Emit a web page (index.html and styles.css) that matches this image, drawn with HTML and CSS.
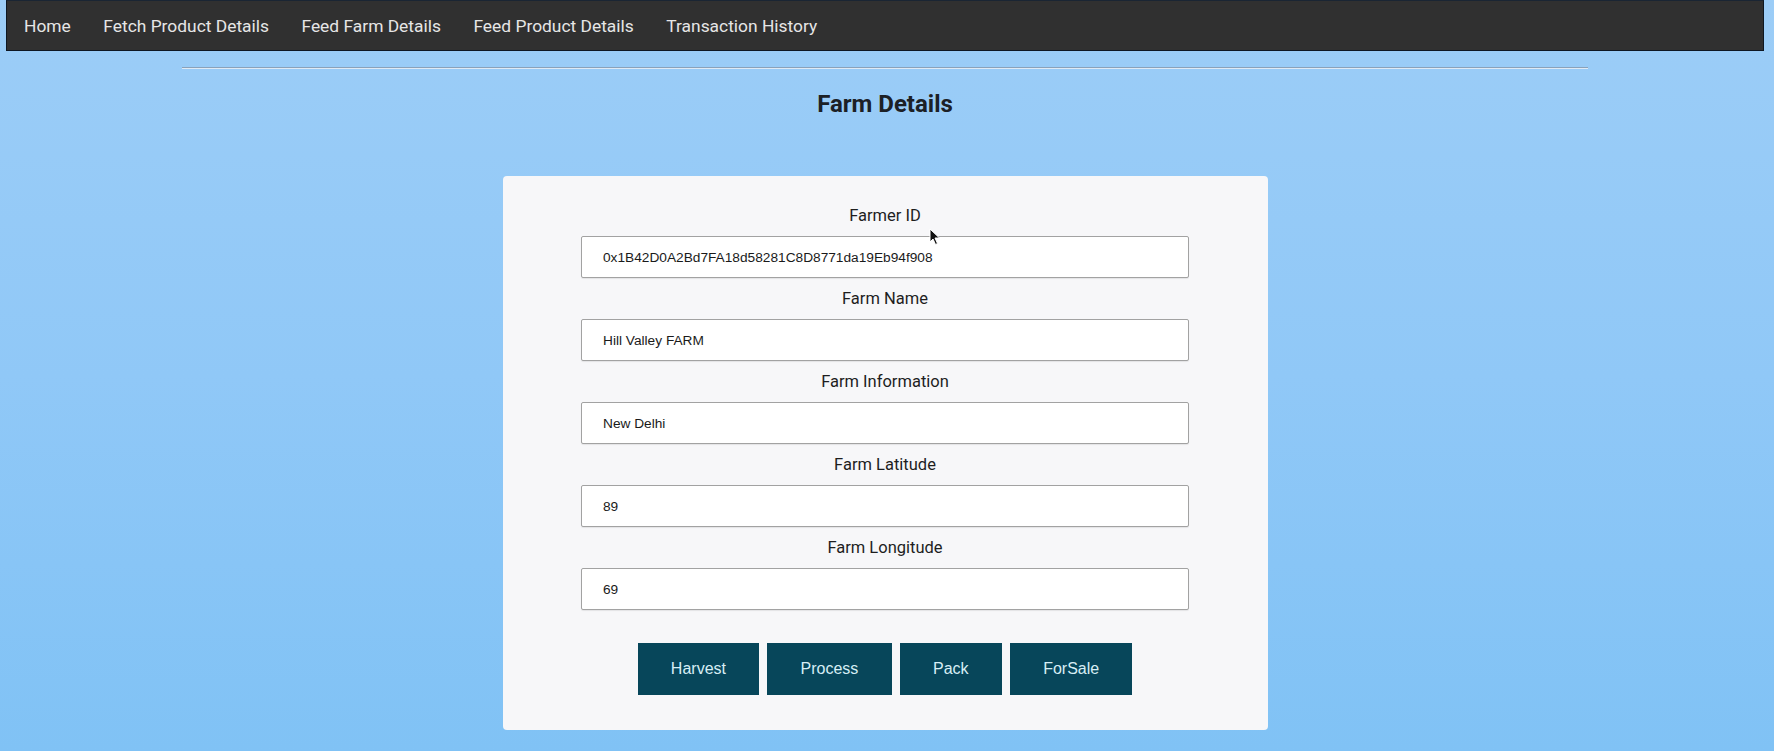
FILE: index.html
```html
<!DOCTYPE html>
<html lang="en">
<head>
<meta charset="utf-8">
<title>Farm Details</title>
<link rel="stylesheet" href="styles.css">
</head>
<body>
<div class="app">
  <nav class="navbar">
    <a class="nav-link" href="#">Home</a>
    <a class="nav-link" href="#">Fetch Product Details</a>
    <a class="nav-link" href="#">Feed Farm Details</a>
    <a class="nav-link" href="#">Feed Product Details</a>
    <a class="nav-link" href="#">Transaction History</a>
  </nav>
  <hr class="divider">
  <h3 class="title">Farm Details</h3>
  <div class="card">
    <form class="form">
      <label class="label">Farmer ID</label>
      <input class="field" type="text" value="0x1B42D0A2Bd7FA18d58281C8D8771da19Eb94f908">
      <label class="label">Farm Name</label>
      <input class="field" type="text" value="Hill Valley FARM">
      <label class="label">Farm Information</label>
      <input class="field" type="text" value="New Delhi">
      <label class="label">Farm Latitude</label>
      <input class="field" type="text" value="89">
      <label class="label">Farm Longitude</label>
      <input class="field" type="text" value="69">
      <div class="actions">
        <button class="btn" type="button">Harvest</button>
        <button class="btn" type="button">Process</button>
        <button class="btn" type="button">Pack</button>
        <button class="btn" type="button">ForSale</button>
      </div>
    </form>
    <svg class="cursor" width="12" height="18" viewBox="0 0 12 18"><path d="M1 1 L1 14 L4 11 L6.5 16.5 L8.5 15.5 L6 10 L10.5 10 Z" fill="#111" stroke="#fff" stroke-width="1"/></svg>
  </div>
</div>
</body>
</html>
```
FILE: styles.css
```css
* { box-sizing: border-box; }
html, body {
  margin: 0;
  padding: 0;
  height: 100%;
}
body {
  background: linear-gradient(180deg, #9ccdf7 0%, #90c8f7 50%, #80c2f5 100%);
  font-family: Roboto, "Noto Sans", sans-serif;
  overflow: hidden;
}
.app {
  width: 1758px;
  margin-left: 6px;
  display: flex;
  flex-direction: column;
  align-items: center;
}
.navbar {
  width: 100%;
  height: 51px;
  background: #303030;
  border: 1px solid #0e1722;
  border-top-color: #1a2533;
  display: flex;
  align-items: center;
  padding-left: 17px;
  gap: 32.5px;
}
.nav-link {
  color: #e6e6e6;
  text-decoration: none;
  font-size: 17.4px;
  line-height: 20px;
}
.divider {
  width: 80%;
  margin: 16px 0 0 0;
  border: 0;
  border-top: 1px solid #8aa2ba;
  border-bottom: 1px solid #dfeaf5;
  height: 0;
}
.title {
  margin: 21px 0 0 0;
  font-size: 24px;
  font-weight: 700;
  line-height: 28px;
  color: #1c2026;
}
.card {
  position: relative;
  margin-top: 58px;
  width: 765px;
  height: 554px;
  background: #f7f7f9;
  border-radius: 4px;
  padding-top: 28px;
  display: flex;
  justify-content: center;
}
.form {
  width: 608px;
  display: flex;
  flex-direction: column;
  align-items: center;
}
.label {
  font-size: 16.5px;
  line-height: 24px;
  color: #1e1e1e;
  margin-bottom: 8px;
}
.field {
  width: 100%;
  height: 42px;
  border: 1px solid #a2a2a2;
  border-radius: 2px;
  background: #fff;
  padding: 0 0 0 21px;
  font-family: "Liberation Sans", Arial, sans-serif;
  font-size: 13.7px;
  color: #1a1a1a;
  margin-bottom: 9px;
  box-shadow: 0 1px 1px rgba(0,0,0,0.08);
  outline: none;
}
.actions {
  margin-top: 24px;
  display: flex;
  gap: 8px;
  justify-content: center;
}
.btn {
  background: #07465a;
  color: #d7eef5;
  border: 0;
  border-radius: 0;
  font-family: "Liberation Sans", Arial, sans-serif;
  font-size: 16px;
  line-height: 18px;
  padding: 17px 33.3px;
  cursor: pointer;
}
.cursor {
  position: absolute;
  left: 426px;
  top: 52px;
}
```
